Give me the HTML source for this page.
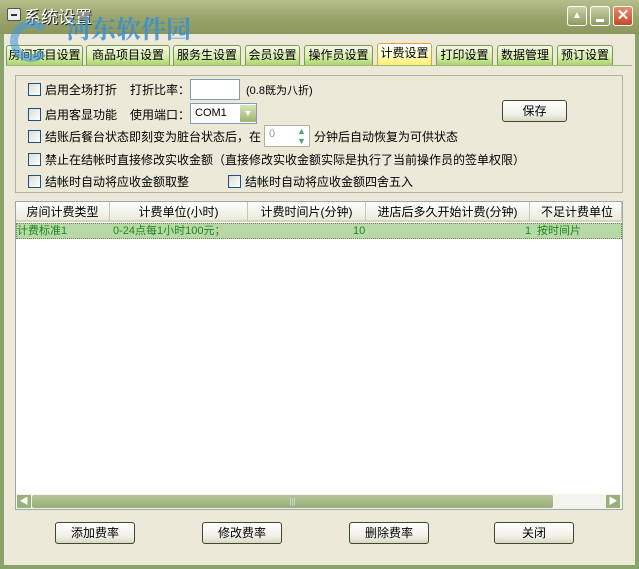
<!DOCTYPE html><html><head><meta charset="utf-8"><style>
*{margin:0;padding:0;box-sizing:border-box}
body{width:639px;height:569px;overflow:hidden;font-family:"Liberation Sans","Noto Sans CJK SC",sans-serif;font-size:12px;color:#000;background:#8aa36a;position:relative}
.a{position:absolute}
#title{left:0;top:0;width:639px;height:34px;background:linear-gradient(#b7be8c,#9aa56c 50%,#8c975e);}
#body{left:4px;top:34px;width:631px;height:531px;background:#ece9d8}
.tab{position:absolute;top:45px;height:20px;border:1px solid #7f9a52;border-bottom:none;border-radius:3px 3px 0 0;background:linear-gradient(#f4f8e8,#d6ecaa 60%,#a8d46a);font-size:12px;line-height:19px;text-align:center;white-space:nowrap}
.tab.on{background:linear-gradient(#fff,#fffbd0 50%,#fff06a);top:43px;height:22px;border-color:#e0a040}
.cb{position:absolute;width:13px;height:13px;border:1px solid #1c5180;background:linear-gradient(135deg,#dcdcd6,#fff)}
.t{position:absolute;white-space:nowrap;font-size:12px}
.btn{position:absolute;height:22px;border:1px solid #3f4a2a;border-radius:3px;background:linear-gradient(#fff,#f0efe6 70%,#d8d5c0);text-align:center;line-height:20px}
.hd{position:absolute;top:202px;height:20px;line-height:20px;text-align:center;border-right:1px solid #c9c6b4;background:linear-gradient(#fff,#ebeadb);border-bottom:2px solid #d6d3c2}
.wb{width:20px;height:20px;border:1px solid #fff;border-radius:3px;position:absolute;top:6px}
</style></head><body>
<div id="title" class="a"></div>
<div id="body" class="a"></div>
<div class="a" style="left:7px;top:8px;width:14px;height:13px;border:1px solid #555;background:#eee;border-radius:2px"><div style="margin:5px 3px;height:2px;background:#333"></div></div>
<div class="a" style="left:24px;top:3px;font-size:17px;color:#fff;text-shadow:1px 1px 0 #222">系统设置</div>
<div class="wb" style="left:567px;background:linear-gradient(#c9d0a4,#8e9a62);color:#fff;text-align:center;font-size:10px;line-height:18px">▲</div>
<div class="wb" style="left:590px;background:linear-gradient(#c9d0a4,#8e9a62)"><div style="margin:12px 5px 0;height:3px;background:#fff"></div></div>
<div class="wb" style="left:613px;background:linear-gradient(#e88a6a,#c8482a);color:#fff;text-align:center;font-size:15px;line-height:18px;font-weight:bold">✕</div>
<div class="tab" style="left:6px;width:77px">房间项目设置</div>
<div class="tab" style="left:86px;width:84px">商品项目设置</div>
<div class="tab" style="left:173px;width:68px">服务生设置</div>
<div class="tab" style="left:245px;width:55px">会员设置</div>
<div class="tab" style="left:304px;width:69px">操作员设置</div>
<div class="tab on" style="left:377px;width:55px">计费设置</div>
<div class="tab" style="left:436px;width:57px">打印设置</div>
<div class="tab" style="left:497px;width:56px">数据管理</div>
<div class="tab" style="left:557px;width:56px">预订设置</div>
<div class="a" style="left:66px;top:12px;font-size:25px;font-weight:bold;color:#3a8fd0;opacity:.85;font-family:'Noto Serif CJK SC',serif;line-height:32px">河东软件园</div>
<div class="a" style="left:10px;top:20px;width:42px;height:42px;border-radius:50%;border:8px solid #4a9ad8;border-right-color:transparent;opacity:.6"></div>
<div class="a" style="left:6px;top:65px;width:626px;height:1px;background:#9bb87a"></div>
<div class="a" style="left:15px;top:75px;width:608px;height:118px;border:1px solid #b5b3a0"></div>
<div class="cb" style="left:28px;top:83px"></div><div class="t" style="left:45px;top:81px">启用全场打折</div>
<div class="t" style="left:130px;top:81px">打折比率：</div>
<div class="a" style="left:190px;top:79px;width:50px;height:21px;border:1px solid #7f9db9;background:#fff"></div>
<div class="t" style="left:246px;top:82px;font-size:11px">(0.8既为八折)</div>
<div class="cb" style="left:28px;top:108px"></div><div class="t" style="left:45px;top:106px">启用客显功能</div>
<div class="t" style="left:130px;top:106px">使用端口：</div>
<div class="a" style="left:190px;top:103px;width:67px;height:21px;border:1px solid #7f9db9;background:#fff;font-size:11px;padding:3px 4px">COM1</div>
<div class="a" style="left:240px;top:105px;width:16px;height:17px;background:linear-gradient(#d8e6b8,#9cb46e);color:#fff;font-size:9px;text-align:center;line-height:17px">▼</div>
<div class="btn" style="left:502px;top:100px;width:65px">保存</div>
<div class="cb" style="left:28px;top:130px"></div><div class="t" style="left:45px;top:128px">结账后餐台状态即刻变为脏台状态后，在</div>
<div class="a" style="left:264px;top:125px;width:46px;height:22px;border:1px solid #b5b3a0;background:#fff;color:#999;font-size:11px;padding:2px 4px">0</div>
<div class="a" style="left:294px;top:126px;width:15px;height:20px;color:#4a7;font-size:9px;line-height:10px;text-align:center">▲<br>▼</div>
<div class="t" style="left:314px;top:128px">分钟后自动恢复为可供状态</div>
<div class="cb" style="left:28px;top:153px"></div><div class="t" style="left:45px;top:151px">禁止在结帐时直接修改实收金额（直接修改实收金额实际是执行了当前操作员的签单权限）</div>
<div class="cb" style="left:28px;top:175px"></div><div class="t" style="left:45px;top:173px">结帐时自动将应收金额取整</div>
<div class="cb" style="left:228px;top:175px"></div><div class="t" style="left:245px;top:173px">结帐时自动将应收金额四舍五入</div>
<div class="a" style="left:15px;top:201px;width:608px;height:309px;border:1px solid #9aa;background:#fff"></div>
<div class="hd" style="left:16px;width:94px">房间计费类型</div>
<div class="hd" style="left:110px;width:138px">计费单位(小时)</div>
<div class="hd" style="left:248px;width:118px">计费时间片(分钟)</div>
<div class="hd" style="left:366px;width:164px">进店后多久开始计费(分钟)</div>
<div class="hd" style="left:530px;width:92px;text-align:left;padding-left:11px;overflow:hidden">不足计费单位的</div>
<div class="a" style="left:16px;top:223px;width:606px;height:16px;background:#b8d8a8;border:1px dotted #6a8a4a;color:#1a8a1a;font-size:11px;line-height:14px">
<span class="a" style="left:0">计费标准1</span><span class="a" style="left:96px">0-24点每1小时100元；</span><span class="a" style="left:336px">10</span><span class="a" style="left:508px">1</span><span class="a" style="left:520px">按时间片</span></div>
<div class="a" style="left:16px;top:494px;width:606px;height:15px;background:#f4f3ee"></div>
<div class="a" style="left:17px;top:495px;width:14px;height:13px;background:#9ab07a;color:#fff;font-size:9px;text-align:center;line-height:13px">◀</div>
<div class="a" style="left:32px;top:495px;width:521px;height:13px;background:linear-gradient(#b4c69a,#98ae78);border-radius:2px;color:#dde;font-size:8px;text-align:center;line-height:13px">|||</div>
<div class="a" style="left:606px;top:495px;width:14px;height:13px;background:#9ab07a;color:#fff;font-size:9px;text-align:center;line-height:13px">▶</div>
<div class="btn" style="left:55px;top:522px;width:80px">添加费率</div>
<div class="btn" style="left:202px;top:522px;width:80px">修改费率</div>
<div class="btn" style="left:349px;top:522px;width:80px">删除费率</div>
<div class="btn" style="left:494px;top:522px;width:80px">关闭</div>
</body></html>
